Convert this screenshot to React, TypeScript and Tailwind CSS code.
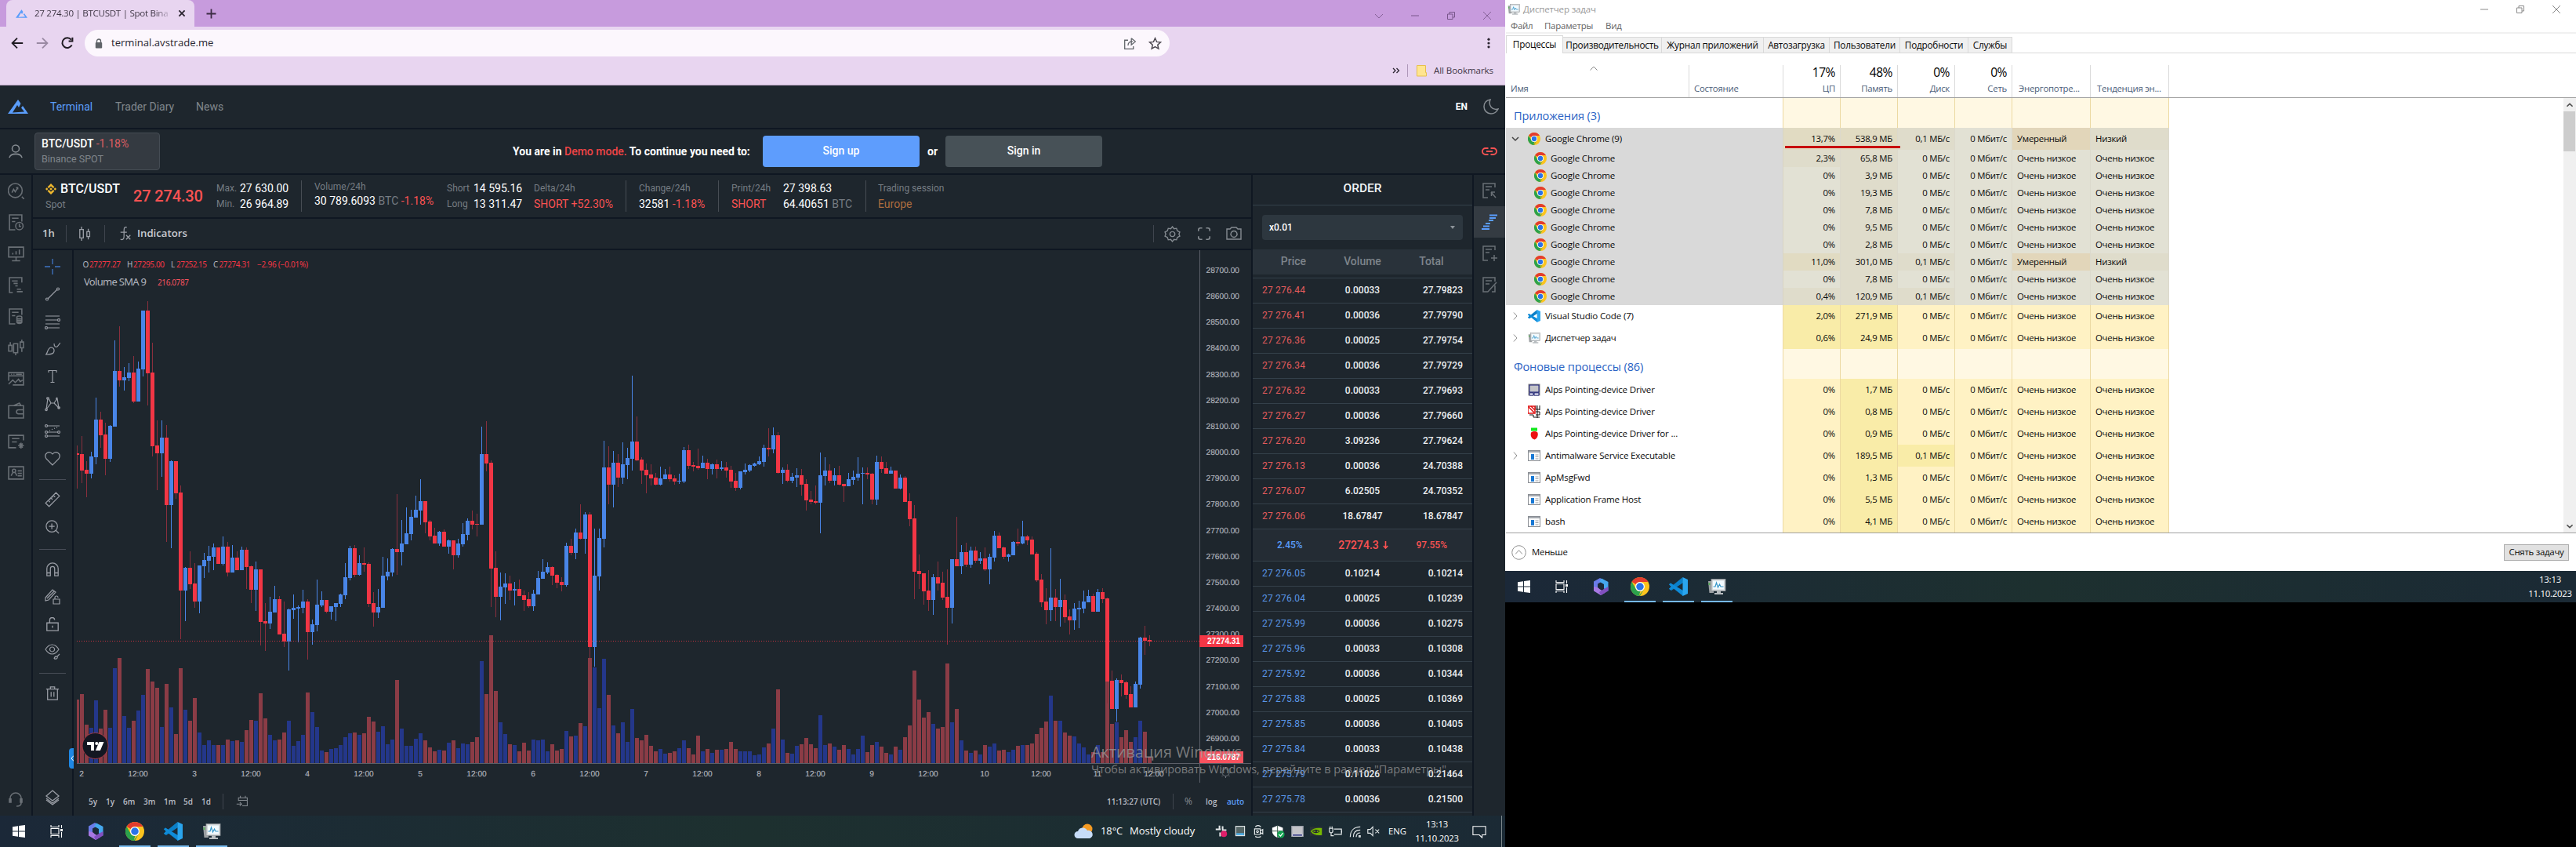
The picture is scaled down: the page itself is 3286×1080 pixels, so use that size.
import React from "react";

type Row = [string, number, number, number, number, number];
type Block = { origin: number; scale: number; base: number; rows: Row[] };

/* [direction, high, body top, body bottom, low, volume top] in the block's own units */
const BLOCKS: Block[] = [
  {
    origin: 300, scale: 3, base: 2020,
    rows: [
      ["r", 804, 834, 840, 968, 1776], ["r", 768, 837, 900, 948, 1755], ["r", 864, 897, 912, 1002, 1872], ["b", 828, 846, 912, 930, 1884],
      ["b", 621, 705, 849, 876, 1779], ["r", 675, 705, 765, 812, 1887], ["r", 717, 762, 855, 918, 1815], ["b", 726, 729, 855, 867, 1884],
      ["b", 402, 519, 732, 732, 1656], ["r", 348, 519, 555, 579, 1617], ["b", 504, 543, 555, 594, 1839], ["b", 489, 525, 546, 558, 1884],
      ["r", 462, 525, 636, 642, 1857], ["b", 483, 510, 636, 636, 1818], ["b", 288, 288, 513, 540, 1758], ["r", 252, 288, 528, 651, 1659],
      ["r", 411, 525, 807, 846, 1707], ["r", 708, 804, 834, 975, 1731], ["b", 708, 774, 834, 924, 1881], ["r", 726, 774, 1032, 1173, 1716],
      ["b", 861, 864, 1032, 1197, 1806], ["r", 864, 864, 987, 1008, 1908],
    ],
  },
  {
    origin: 680, scale: 3, base: 880,
    rows: [
      ["r", -183, -156, 219, 405, 516], ["b", 129, 132, 219, 336, 675], ["r", 69, 132, 195, 213, 717], ["r", 114, 192, 261, 285, 630],
      ["b", 123, 123, 261, 306, 762], ["b", 75, 102, 126, 171, 810], ["b", 48, 87, 105, 150, 792], ["b", 39, 54, 90, 141, 810],
      ["r", 54, 54, 117, 117, 810], ["b", 12, 51, 117, 123, 810], ["r", 33, 51, 150, 165, 789], ["b", 45, 93, 150, 150, 795],
      ["r", 69, 93, 141, 141, 792], ["b", 51, 63, 141, 141, 798], ["r", 54, 63, 129, 213, 753], ["r", 123, 126, 216, 267, 714],
      ["b", 108, 138, 216, 297, 717], ["r", 138, 138, 339, 429, 612], ["r", 267, 336, 345, 450, 708], ["b", 243, 300, 345, 366, 771],
      ["b", 201, 252, 303, 303, 792], ["r", 240, 252, 387, 387, 789], ["r", 261, 384, 414, 435, 762], ["b", 288, 291, 414, 525, 717],
      ["b", 234, 285, 294, 327, 813], ["b", 276, 282, 288, 417, 795], ["b", 216, 261, 285, 306, 771], ["r", 252, 261, 378, 483, 609],
      ["b", 330, 348, 378, 426, 684], ["b", 177, 273, 351, 375, 741], ["b", 222, 255, 276, 282, 831], ["r", 255, 255, 300, 306, 837],
      ["b", 279, 279, 300, 330, 825], ["b", 267, 267, 282, 336, 822], ["b", 231, 234, 270, 282, 810], ["b", 114, 168, 237, 252, 780],
      ["b", 48, 57, 171, 180, 765], ["r", 45, 57, 159, 168, 762], ["b", 84, 114, 159, 162, 771], ["r", 54, 114, 120, 147, 765],
      ["r", 111, 117, 270, 282, 702], ["r", 225, 267, 303, 357, 720], ["b", 213, 282, 303, 324, 759], ["b", 90, 162, 285, 285, 738],
      ["b", 96, 147, 165, 180, 807], ["b", 57, 60, 150, 165, 789], ["r", -150, 60, 72, 159, 561],
    ],
  },
  {
    origin: 440, scale: 2.8, base: 1492,
    rows: [
      ["b", 624, 708, 739, 787, 1369], ["b", 580, 672, 711, 711, 1431], ["b", 588, 613, 675, 697, 1431], ["b", 538, 588, 616, 616, 1406],
      ["b", 479, 557, 591, 641, 1386], ["r", 557, 557, 633, 672, 1411], ["r", 624, 630, 683, 697, 1436], ["r", 652, 680, 708, 708, 1450],
      ["b", 664, 666, 708, 717, 1445], ["r", 658, 666, 720, 720, 1448], ["b", 694, 697, 720, 745, 1420], ["r", 697, 697, 750, 801, 1411],
      ["b", 692, 708, 750, 759, 1439], ["b", 636, 675, 711, 720, 1422], ["b", 619, 627, 678, 697, 1425], ["r", 591, 627, 641, 658, 1417],
      ["r", 602, 638, 641, 683, 1400], ["b", 291, 389, 641, 641, 1128], ["r", 272, 389, 423, 451, 1246], ["r", 412, 420, 798, 935, 1036],
      ["r", 736, 795, 899, 972, 1235], ["b", 812, 862, 899, 983, 1347], ["b", 815, 851, 865, 924, 1389], ["r", 823, 851, 876, 910, 1425],
      ["b", 846, 871, 876, 930, 1428], ["r", 837, 871, 896, 896, 1450], ["r", 876, 893, 910, 949, 1420], ["r", 882, 907, 932, 938, 1448],
      ["b", 874, 888, 932, 949, 1408], ["b", 806, 832, 890, 890, 1411], ["b", 764, 809, 834, 834, 1408], ["b", 776, 792, 812, 818, 1450],
      ["r", 790, 792, 823, 857, 1425], ["r", 818, 820, 848, 868, 1448], ["r", 829, 846, 857, 879, 1442], ["b", 706, 717, 857, 862, 1378],
      ["r", 692, 717, 742, 750, 1397], ["b", 655, 669, 742, 764, 1394], ["r", 568, 669, 692, 694, 1350], ["b", 596, 605, 692, 745, 1361],
      ["r", 596, 605, 1078, 1117, 1117], ["b", 655, 823, 1078, 1148, 1151], ["b", 655, 689, 826, 876, 1296], ["b", 342, 437, 692, 722, 1120],
      ["r", 361, 437, 498, 568, 1249], ["b", 378, 420, 498, 580, 1358], ["r", 389, 420, 473, 507, 1386], ["b", 347, 426, 473, 496, 1347],
      ["b", 367, 403, 428, 479, 1417], ["b", 109, 344, 406, 448, 1299], ["r", 255, 344, 412, 414, 1403], ["r", 400, 409, 448, 496, 1411],
      ["r", 423, 445, 465, 529, 1392], ["r", 426, 462, 476, 501, 1431], ["r", 456, 473, 498, 501, 1450], ["b", 434, 476, 498, 501, 1442],
      ["b", 442, 462, 479, 479, 1459], ["r", 434, 462, 479, 487, 1456], ["r", 465, 476, 487, 498, 1450], ["b", 459, 484, 487, 496, 1439],
      ["b", 364, 375, 487, 493, 1411], ["r", 356, 375, 431, 442, 1439], ["r", 417, 428, 434, 451, 1462], ["r", 370, 431, 440, 445, 1394],
      ["b", 395, 420, 440, 440, 1450], ["r", 406, 420, 442, 479, 1442], ["b", 423, 426, 442, 462, 1456], ["r", 409, 426, 442, 476, 1445],
      ["b", 414, 437, 442, 448, 1445], ["r", 417, 437, 448, 473, 1442], ["r", 431, 445, 487, 510, 1417], ["r", 456, 484, 510, 521, 1442],
      ["b", 451, 451, 510, 515, 1450], ["b", 423, 445, 454, 462, 1450], ["b", 426, 428, 448, 454, 1450], ["b", 420, 423, 431, 434, 1464],
      ["b", 398, 414, 426, 428, 1462], ["b", 356, 367, 417, 434, 1436], ["r", 297, 367, 372, 398, 1422], ["b", 294, 322, 372, 386, 1369],
      ["r", 311, 322, 456, 459, 1229], ["b", 437, 445, 456, 496, 1408], ["r", 426, 445, 484, 490, 1456], ["b", 456, 470, 484, 493, 1459],
      ["b", 440, 465, 473, 507, 1431], ["r", 442, 465, 498, 538, 1425], ["r", 479, 496, 554, 591, 1403], ["r", 521, 552, 560, 568, 1425],
    ],
  },
  {
    origin: 440, scale: 2.45, base: 1306,
    rows: [
      ["r", 439, 488, 492, 497, 1259], ["b", 336, 407, 492, 588, 1156], ["b", 350, 392, 409, 439, 1249], ["r", 372, 392, 424, 431, 1245],
      ["b", 385, 407, 424, 439, 1254], ["r", 377, 407, 436, 439, 1264], ["r", 434, 434, 441, 490, 1249], ["b", 399, 419, 441, 441, 1262],
      ["b", 392, 412, 421, 436, 1279], ["b", 350, 402, 414, 424, 1262], ["b", 382, 399, 403, 497, 1220], ["r", 382, 399, 404, 419, 1272],
      ["r", 399, 402, 483, 497, 1249], ["b", 345, 365, 483, 500, 1240], ["r", 348, 365, 387, 399, 1254], ["r", 365, 385, 402, 402, 1274],
      ["b", 380, 392, 402, 402, 1279], ["r", 392, 392, 448, 448, 1254], ["b", 404, 414, 448, 451, 1264], ["r", 409, 414, 490, 490, 1225],
      ["r", 463, 488, 544, 566, 1188], ["r", 500, 541, 708, 794, 1017], ["r", 654, 706, 715, 762, 1107], ["r", 713, 713, 769, 811, 1164],
      ["r", 703, 767, 796, 831, 1147], ["b", 715, 725, 796, 843, 1183], ["r", 676, 725, 745, 767, 1198], ["r", 708, 742, 789, 796, 1193],
      ["r", 701, 786, 821, 936, 995], ["b", 669, 669, 821, 870, 1178], ["r", 537, 669, 691, 691, 1137], ["b", 625, 647, 691, 715, 1235],
      ["r", 617, 647, 686, 693, 1267], ["b", 630, 642, 686, 696, 1274], ["r", 630, 642, 674, 681, 1267], ["b", 647, 666, 674, 684, 1279],
      ["r", 632, 666, 701, 706, 1249], ["b", 652, 661, 701, 747, 1254], ["b", 581, 595, 664, 676, 1245], ["r", 586, 595, 635, 635, 1267],
      ["r", 630, 632, 661, 669, 1264], ["b", 652, 654, 661, 676, 1272], ["b", 613, 615, 657, 657, 1264], ["r", 573, 615, 620, 627, 1252],
      ["b", 549, 598, 620, 622, 1249], ["r", 593, 598, 610, 625, 1249], ["r", 598, 608, 654, 654, 1245], ["r", 647, 652, 735, 740, 1215],
      ["r", 715, 733, 804, 818, 1196], ["r", 759, 801, 828, 872, 1176], ["b", 635, 789, 828, 862, 1095], ["r", 762, 789, 818, 862, 1174],
      ["b", 730, 796, 818, 880, 1174], ["r", 779, 796, 850, 867, 1210], ["r", 826, 848, 860, 904, 1220], ["b", 806, 823, 860, 889, 1223],
      ["b", 799, 821, 826, 884, 1245], ["b", 767, 801, 823, 838, 1257], ["b", 764, 784, 804, 804, 1279], ["r", 777, 784, 833, 833, 1272],
      ["b", 762, 772, 833, 833, 1249], ["r", 759, 772, 794, 806, 1272], ["r", 789, 791, 1051, 1119, 1051], ["r", 1017, 1049, 1137, 1137, 1183],
      ["b", 1041, 1046, 1137, 1176, 1178], ["r", 1029, 1046, 1056, 1098, 1225], ["r", 1049, 1053, 1093, 1105, 1203], ["r", 1066, 1090, 1132, 1132, 1240],
      ["b", 1051, 1058, 1132, 1132, 1225], ["b", 911, 914, 1061, 1073, 1174], ["r", 877, 914, 924, 968, 1208], ["r", 906, 921, 926, 941, 1286],
    ],
  },
];

const AXIS_Y = 973;

const CANDLES = BLOCKS.flatMap((b) =>
  b.rows.map(([dir, ...v]) => {
    const [high, top, bottom, low, vol] = v.map((n) => Math.round(b.origin + n / b.scale));
    return { up: dir === "b", high, top, bottom, low, vol };
  }),
);

function PriceChart() {
  return (
    <svg className="block" width="1502" height="681" viewBox="94 319 1502 681" shapeRendering="crispEdges">
      <clipPath id="pane"><rect x="98" y="319" width="1432" height="655" /></clipPath>
      <g clipPath="url(#pane)">
        {CANDLES.map((c, i) => (
          <rect key={i} x={96 + 6 * i} y={c.vol} width="5" height={Math.max(1, AXIS_Y - c.vol)} fill={c.up ? "#24378a" : "#8b3c46"} />
        ))}
        {CANDLES.map((c, i) => (
          <g key={i}>
            <rect x={98 + 6 * i} y={c.high} width="1" height={c.low - c.high} fill={c.up ? "#4985e7" : "#8a2f3d"} />
            <rect x={96 + 6 * i} y={c.top} width="5" height={Math.max(1, c.bottom - c.top)} fill={c.up ? "#4985e7" : "#f23645"} />
          </g>
        ))}
      </g>
      <line x1="98" y1="817.5" x2="1530" y2="817.5" stroke="#f23645" strokeDasharray="1 2" strokeOpacity="0.8" />
      <line x1="98" y1="973.5" x2="1596" y2="973.5" stroke="#5b5f68" />
      <line x1="1530.5" y1="319" x2="1530.5" y2="998" stroke="#5b5f68" />
      <g fontFamily="Liberation Sans, sans-serif" fontSize="10.2" fill="#b2b5be" stroke="#b2b5be" strokeWidth="0.15" textRendering="geometricPrecision">
        {Array.from({ length: 19 }, (_, k) => (
          <text key={k} x="1538.5" y={348 + 33.16 * k} textLength="42.5">{28700 - 100 * k}.00</text>
        ))}
        {Array.from({ length: 20 }, (_, k) => (
          <text key={k} x={104 + 72 * k} y="989.5" textAnchor="middle" fontSize="10.2">{k % 2 ? "12:00" : 2 + k / 2}</text>
        ))}
      </g>
      <rect x="1530" y="810" width="56" height="15" rx="1" fill="#f23645" />
      <rect x="1530" y="958" width="56" height="15" rx="1" fill="#f7525f" />
      <g fontFamily="Liberation Sans, sans-serif" fontSize="10.2" fontWeight="700" fill="#fff">
        <text x="1540" y="821.3" textLength="42">27274.31</text>
        <text x="1540" y="969.3" textLength="42">216.0787</text>
      </g>
      <g fontFamily="Noto Sans, sans-serif" fontSize="10" fill="#f23645">
        <text x="105.5" y="341" fill="#b2b5be">O</text><text x="114" y="341" textLength="40">27277.27</text>
        <text x="162" y="341" fill="#b2b5be">H</text><text x="170" y="341" textLength="40">27295.00</text>
        <text x="218" y="341" fill="#b2b5be">L</text><text x="225" y="341" textLength="39">27252.15</text>
        <text x="272" y="341" fill="#b2b5be">C</text><text x="279.500" y="341" textLength="40">27274.31</text>
        <text x="328" y="341" textLength="65">−2.96 (−0.01%)</text>
        <text x="107" y="364" fontSize="13" fill="#b2b5be" textLength="80">Volume SMA 9</text>
        <text x="201" y="364" fill="#f7525f" textLength="40">216.0787</text>
      </g>
      <g shapeRendering="auto">
        <circle cx="121.500" cy="951" r="16.500" fill="#131722" stroke="#b9404c" strokeWidth="0.8" />
        <path d="M111 946h9v11h-4v-7h-5zM126.500 946h6l-4.600 11h-6z" fill="#fff" />
        <circle cx="123.300" cy="948" r="2.100" fill="#fff" />
        <g stroke="#6f747c" fill="none">
          <circle cx="1563.500" cy="985" r="4.500" />
          <path d="M1563.500 978v2M1563.500 990v2M1556.500 985h2M1568.500 985h2M1558.500 980l1.500 1.500M1567 988.500l1.500 1.500M1568.500 980l-1.500 1.500M1560 988.500l-1.500 1.500" />
        </g>
      </g>
    </svg>
  );
}

function Ico({ d, s = 20, c = "#7f858b", w = 1.3, fill = "none", children }: { d?: string; s?: number; c?: string; w?: number; fill?: string; children?: React.ReactNode }) {
  return (
    <svg className="block shrink-0" width={s} height={s} viewBox="0 0 20 20" fill={fill} stroke={c} strokeWidth={w}>
      {d && <path d={d} />}
      {children}
    </svg>
  );
}

const ChromeLogo = ({ s }: { s: number }) => (
  <svg className="block shrink-0" width={s} height={s} viewBox="0 0 48 48">
    <circle cx="24" cy="24" r="24" fill="#fcc31e" />
    <path d="M24 0a24 24 0 0 1 20.800 12H24a12 12 0 0 0-10.400 6L3.200 12A24 24 0 0 1 24 0z" fill="#e33b2e" />
    <path d="M3.200 12 13.600 30A12 12 0 0 0 24 36h.9L21 48A24 24 0 0 1 3.200 12z" fill="#2ba24c" />
    <path d="M34.400 30 24 48a24 24 0 0 1-3.500-.2z" fill="#2ba24c" />
    <circle cx="24" cy="24" r="12" fill="#fff" />
    <circle cx="24" cy="24" r="9.500" fill="#2a73e8" />
  </svg>
);

const VsLogo = ({ s }: { s: number }) => (
  <svg className="block shrink-0" width={s} height={s} viewBox="0 0 24 24">
    <path d="M0 9.300 2 7.600 5.200 10 17.500 0 18 7 3 17 0 14.800 2.800 12z" fill="#0a7fc8" />
    <path d="M2 16.400 0 14.700 3 12 0 9.300 2 7.600 18 17v7L5.200 14z" fill="#0f8bd8" />
    <path d="M17.500 0 24 3v18l-6.500 3z" fill="#2aa5ee" />
  </svg>
);

const MonitorLogo = ({ s }: { s: number }) => (
  <svg className="block shrink-0" width={s} height={s} viewBox="0 0 24 24">
    <path d="M1 5h7v15H2.500z" fill="#9da1a4" />
    <rect x="1.500" y="7" width="2" height="3" fill="#5bb05b" />
    <rect x="5" y="2.500" width="18" height="15" fill="#d3d7d9" stroke="#8f9498" strokeWidth="0.8" />
    <rect x="7" y="4.500" width="14" height="11" fill="#f2fafe" />
    <path d="M7.500 12h2.500l1.500-5 2 6 2-4 1.500 3h3.500" fill="none" stroke="#3797c9" strokeWidth="1.200" />
    <path d="M12 17.500h5v2.500h3v2H9v-2h3z" fill="#b8bdc0" />
  </svg>
);

const HexLogo = ({ s }: { s: number }) => (
  <svg className="block shrink-0" width={s} height={s} viewBox="0 0 24 24">
    <path d="M11 1 3 5.500v10L8 13V8.500L16 4z" fill="#6a7be8" />
    <path d="M3 12v5.500L12 23l6-3.500-7-4L8 13z" fill="#a678e2" />
    <path d="M13 1.500 21.500 6v11.500L16 14.500V9L10 5.500z" fill="#45a8ee" />
    <path d="M21.500 12v5.500L12 23l-2-4 6-4z" fill="#8250c0" />
  </svg>
);

const WinLogo = () => (
  <svg className="block" width="16" height="16" viewBox="0 0 16 16" fill="#fff">
    <path d="M0 2.200 7 1.200v6.300H0zM8 1.100 16 0v7.500H8zM0 8.500h7v6.300L0 13.800zM8 8.500h8V16l-8-1.100z" />
  </svg>
);

const TaskView = () => (
  <svg className="block" width="17" height="16" viewBox="0 0 17 16" fill="none" stroke="#fff" strokeWidth="1.100">
    <path d="M1 0v2.500h10V0M1 16v-2.500h10V16M1 4.500h10v7H1zM14.500 0v4M14.500 9v7" />
    <path d="M13 5h3v3h-3z" fill="#fff" stroke="none" />
  </svg>
);

function TaskIcons() {
  return (
    <div className="flex h-10 items-stretch">
      <div className="flex w-12 items-center justify-center"><WinLogo /></div>
      <div className="flex w-[49px] items-center justify-center"><TaskView /></div>
      <div className="flex w-[50px] items-center justify-center"><HexLogo s={24} /></div>
      {[<ChromeLogo key="c" s={24} />, <VsLogo key="v" s={24} />, <MonitorLogo key="m" s={24} />].map((icon, i) => (
        <div key={i} className="mx-[4.5px] flex w-10 flex-col items-center justify-end">
          <div className="mb-[6px]">{icon}</div>
          <div className="h-0.5 w-10 shrink-0 bg-[#76b9ed]" />
        </div>
      ))}
    </div>
  );
}

function BrandMark({ w, h }: { w: number; h: number }) {
  return (
    <svg className="block shrink-0" width={w} height={h} viewBox="0 0 26 18">
      <path d="M13 0 0 18h26L19 8l-2 2.500 4 5L6 16.500 12 7l2 3 2.500-5z" fill="#5a9dfb" />
    </svg>
  );
}

function Browser() {
  return (
    <div className="h-[109px] border-b border-[#b9a3c2] bg-[#e8d5f0] font-['Open_Sans',sans-serif]">
      <div className="flex h-[34px] items-end bg-[#c79bdd]">
        <div className="ml-2 flex h-[34px] w-[240px] items-center rounded-t-lg bg-[#e8d5f0] pl-3">
          <BrandMark w={15} h={11} />
          <div className="ml-[9px] w-[174px] bg-gradient-to-r from-[#3c3442] from-88% to-[#e0cce9] to-100% bg-clip-text text-[11.6px] tracking-[-0.3px] whitespace-nowrap text-transparent">27 274.30 | BTCUSDT | Spot Bina</div>
          <div className="ml-2"><Ico s={12} w={3} c="#2b2430" d="M4 4l12 12M16 4L4 16" /></div>
        </div>
        <div className="ml-[14px] flex h-[34px] w-4 items-center"><Ico s={15} w={2.400} c="#3c2b45" d="M10 2v16M2 10h16" /></div>
        <div className="mr-[18px] ml-auto flex h-[28px] items-center gap-9">
          <Ico s={10} w={1.700} c="#78568a" d="M0 6l10 10L20 6" />
          <Ico s={10} w={2} c="#78568a" d="M0 10h20" />
          <Ico s={10} w={2} c="#78568a" d="M1 6h13v13H1zM6 6V1h13v13h-5" />
          <Ico s={10} w={1.700} c="#78568a" d="M0 0l20 20M20 0L0 20" />
        </div>
      </div>
      <div className="mt-1 flex h-[34px] items-center pl-[14px]">
        <Ico s={16} w={2.300} c="#1f1b22" d="M19 10H3M10 2l-8 8 8 8" />
        <div className="ml-4"><Ico s={16} w={2.300} c="#9a8aa3" d="M1 10h16M10 2l8 8-8 8" /></div>
        <div className="mr-[14px] ml-4"><Ico s={16} w={2.500} c="#1f1b22" d="M17 13a8 8 0 1 1-1-8.500M18 1v6h-6" /></div>
        <div className="flex h-[34px] w-[1384px] items-center rounded-full bg-[#fcf7fd] pl-[13px]">
          <svg width="10" height="13" viewBox="0 0 10 13"><path d="M2.500 5V3.500a2.500 2.500 0 0 1 5 0V5" fill="none" stroke="#5f6368" strokeWidth="1.400" /><rect x="0.800" y="5" width="8.400" height="7.500" rx="1" fill="#5f6368" /></svg>
          <div className="ml-[11px] text-[13.1px] text-[#2a2630]">terminal.avstrade.me</div>
          <div className="mr-[10px] ml-auto flex gap-[15px]">
            <Ico s={17} w={1.500} c="#5f6368" d="M7 5H2v13h13v-4M7 13c0-4 3-6 7-6M12 2l6 5-6 5V2" />
            <Ico s={17} w={1.700} c="#4b474f" d="M10 2l2.400 5.500 5.800.5-4.400 4 1.300 5.800L10 14.800l-5.100 3 1.300-5.800L1.800 8l5.800-.5z" />
          </div>
        </div>
        <div className="mr-[13px] ml-auto"><Ico s={16} c="none"><g fill="#2b2430"><circle cx="10" cy="4" r="2" /><circle cx="10" cy="10" r="2" /><circle cx="10" cy="16" r="2" /></g></Ico></div>
      </div>
      <div className="flex h-9 items-center justify-end pr-[15px] text-[12px] text-[#3f3646]">
        <Ico s={10} w={2.600} c="#2b2430" d="M2 4l6 6-6 6M11 4l6 6-6 6" />
        <div className="mr-[11px] ml-[9px] h-4 w-px bg-[#ae97b9]" />
        <svg width="13" height="15" viewBox="0 0 13 15"><path d="M0.500 0.500h11v9h1v4.500h-12z" fill="#ffe590" stroke="#e6c04e" /></svg>
        <div className="ml-[9px] w-[76px] text-[11.6px] tracking-[-0.1px] whitespace-nowrap">All Bookmarks</div>
      </div>
    </div>
  );
}

const DOC = "M8 19H2V1h15v5M5 5h8M5 9h5";

const LEFT_ICONS = [
  "M17 17l3 3M9 1a8 8 0 1 0 0 17a8 8 0 0 0 0-17M5 12l2-4 2 3 3-5M10 6h2v2",
  "M9 19H2V1h15v8M5 5h8M5 9h4M14 10a4.500 4.500 0 1 0 0 9a4.500 4.500 0 0 0 0-9M14 12v3h2",
  "M1 2h18v12H1zM10 14v4M5 18.500h10M6 11V9M10 11V7M14 11V5",
  "M6 19H2V1h15v6M5 5h7M7 8h5M9 11h3M11 15h5M11 18h7",
  "M9 19H2V1h15v7M5 5h8M5 9h4M11 11c0-2 6-2 6 0v6c0 2-6 2-6 0zM11 13h6M11 15h6M11 17h6",
  "M1 7h4v7H1zM3 3v4M7 5h5v11H7zM9.500 16v3M15 3h4v7h-4zM17 0v3M17 10v5",
  "M1 12V2h18v15H6M1 6h18M4 4h1M7 4h1M10 4h7M1 16l5-5 3 3 4-4 2 3 3-2",
  "M1 4h18v15H1zM7 4l7-3 2 3M19 9h-6a2.500 2.500 0 0 0 0 5h6",
  "M10 17H1V2h18v6M5 6h9M5 10h6M16 11v7M12.500 14.500h7M14 12l4 5M18 12l-4 5",
  "M1 2h18v15H1zM4 13l2-4h3l2 4M7.500 5a2 2 0 1 0 0 4a2 2 0 0 0 0-4M12 7h5M12 10h5M12 13h5",
];

const DRAW_ICONS: [number, string][] = [
  [35, "M4 16L16 4M17 2a1.500 1.500 0 1 0 0 3a1.500 1.500 0 0 0 0-3M3 15a1.500 1.500 0 1 0 0 3a1.500 1.500 0 0 0 0-3"],
  [35, "M1 3h18M1 8h15M1 13h18M4 18h15M18 6.500a1.500 1.500 0 1 0 0 3a1.500 1.500 0 0 0 0-3M2 16.500a1.500 1.500 0 1 0 0 3a1.500 1.500 0 0 0 0-3"],
  [35, "M1 17c3 0 2-8 7-9c4 0 5 4 3 7c-2 2-5 2-10 2M12 3c0 4 2 5 4 4l4-5"],
  [35, "M5 5V2.500h10V5M10 2.500v15M7.500 17.500h5"],
  [35, "M4 3L2 17L8 9L5 3M8 9L12 9L16 3L18 15L12 9M4 1.500a1.300 1.300 0 1 0 0 2.600a1.300 1.300 0 0 0 0-2.600M16 2a1.300 1.300 0 1 0 0 2.600M2 16a1.300 1.300 0 1 0 .1 0M18 13.500a1.300 1.300 0 1 0 .1 0"],
  [36, "M4 3h15M4 11h12M4 16h15M2 1.500a1.500 1.500 0 1 0 .1 0M2 9.500a1.500 1.500 0 1 0 .1 0M2 14.500a1.500 1.500 0 1 0 .1 0M18 9.500a1.500 1.500 0 1 0 .1 0M6 9l1-.4M9 7.600l1-.4M12 6.400l1-.4M15 5.400l1-.4"],
  [34, "M10 18L2 10C-2 3 6-1 10 4C14-1 22 3 18 10z"],
];

function Rail() {
  return (
    <div className="flex w-[42px] shrink-0 flex-col items-center border-r-2 border-[#0f1722] text-gray-500">
      {LEFT_ICONS.map((d, i) => (
        <div key={i} className="flex h-10 items-center"><Ico s={21} w={1.500} c="#6a7076" d={d} /></div>
      ))}
      <div className="mt-auto flex h-10 items-center"><Ico s={20} w={1.600} c="#6a7076" d="M3 12V8a7 7 0 0 1 14 0v6c0 3-3 4-6 4M2 8v5h2V8M16 8v5h2V8" /></div>
    </div>
  );
}

function DrawTools() {
  const c = "#9a9ea6";
  return (
    <div className="relative flex w-[52px] shrink-0 flex-col items-center border-r-2 border-[#0f1722] pt-1">
      <div className="flex h-[34px] items-center"><Ico s={20} c="#3f74c4" d="M10 0v7M10 13v7M0 10h7M13 10h7" /></div>
      {DRAW_ICONS.map(([h, d], i) => (
        <div key={i} className={h === 35 ? "flex h-[35px] items-center" : h === 36 ? "flex h-9 items-center" : "flex h-[34px] items-center"}><Ico s={20} w={1.200} c={c} d={d} /></div>
      ))}
      <div className="mt-[9px] h-px w-[34px] shrink-0 bg-[#484d57]" />
      <div className="mt-[7px] flex h-[35px] items-center"><Ico s={22} w={1.100} c={c} d="M2 14L14 2l4 4L6 18zM5 11l2 2M8 8l2 2M11 5l2 2M6.500 9.500l1 1M9.500 6.500l1 1" /></div>
      <div className="flex h-[35px] items-center"><Ico s={18} w={1.400} c={c} d="M9 1a8 8 0 1 0 0 16a8 8 0 0 0 0-16M15 15l4 4M9 5v8M5 9h8" /></div>
      <div className="mt-[11px] h-px w-[34px] shrink-0 bg-[#484d57]" />
      <div className="mt-[7px] flex h-[35px] items-center"><Ico s={18} w={1.400} c={c} d="M2 19V9a8 8 0 0 1 16 0v10h-5V9a3 3 0 0 0-6 0v10zM2 15h5M13 15h5" /></div>
      <div className="flex h-[35px] items-center"><Ico s={20} w={1.200} c={c} d="M1 11L10 1l4 3L5 14l-4 1zM3 12l9-9M11 13h8v6h-8zM13 13v-2a2 2 0 0 1 4 0" /></div>
      <div className="flex h-[35px] items-center"><Ico s={18} w={1.500} c={c} d="M2 8h16v11H2zM6 8V4a3.500 3.500 0 0 1 7 0M10 12v3" /></div>
      <div className="flex h-[35px] items-center"><Ico s={20} w={1.200} c={c} d="M1 7c5-8 12-8 17 0c-5 8-12 8-17 0M9.500 4a3 3 0 1 0 .1 0M12 19c1-4 5-4 4-1c-1 2-3 1-4 1M16 16l3-3" /></div>
      <div className="mt-[10px] h-px w-[34px] shrink-0 bg-[#484d57]" />
      <div className="mt-[7px] flex h-[35px] items-center"><Ico s={18} w={1.400} c={c} d="M1 4h18M3 4v15h14V4M7 4V1h6v3M8 8v7M12 8v7" /></div>
      <div className="mt-auto mb-1 flex h-[38px] items-center"><Ico s={20} w={1.300} c="#9a9ea6" d="M10 1l8 7-8 6-8-6zM2 11l8 6 8-6M2 13l8 6 8-6" /></div>
      <div className="absolute bottom-[60px] left-[46px] flex h-[26px] w-1.5 items-center rounded-l bg-[#1e88e5]">
        <svg width="6" height="8" viewBox="0 0 6 8"><path d="M6 0.500 3 4l3 3.500" fill="none" stroke="#fff" /></svg>
      </div>
    </div>
  );
}

const Sep = () => <div className="h-10 w-px shrink-0 bg-[#474d54]" />;

function Stat({ w, a, b }: { w: string; a: React.ReactNode; b: React.ReactNode }) {
  return (
    <div className={`${w} shrink-0 whitespace-nowrap`}>
      <div className="h-5 text-[12px] leading-5 text-[#757c83]">{a}</div>
      <div className="h-5 text-[14px] leading-5 text-white">{b}</div>
    </div>
  );
}

function InfoBar() {
  return (
    <div className="flex h-14 items-center border-b-2 border-[#0f1722] pl-4">
      <div className="w-[112px] shrink-0 pt-[1px]">
        <div className="flex h-5 items-center">
          <svg width="14" height="14" viewBox="0 0 14 14" fill="#f0b92e"><path d="M7 0l4.500 4.500-1.700 1.600L7 3.400 4.200 6.100 2.500 4.500zM7 5.200 8.800 7 7 8.800 5.200 7zM1.700 5.300 3.400 7 1.700 8.700 0 7zM12.300 5.300 14 7l-1.700 1.700L10.600 7zM4.200 7.900 7 10.600l2.800-2.700 1.700 1.600L7 14 2.500 9.500z" /></svg>
          <span className="ml-[5px] text-[16px] font-medium text-white">BTC/USDT</span>
        </div>
        <div className="h-5 text-[12.5px] leading-5 text-[#757c83]">Spot</div>
      </div>
      <div className="w-[106px] shrink-0 text-[20px] font-medium tracking-[-0.15px] text-[#fa5252]">27 274.30</div>
      <div className="w-[108px] shrink-0 text-[14px] text-white">
        <div className="flex h-5 items-center"><span className="w-[30px] text-[12px] text-[#757c83]">Max.</span>27 630.00</div>
        <div className="flex h-5 items-center"><span className="w-[30px] text-[12px] text-[#757c83]">Min.</span>26 964.89</div>
      </div>
      <Sep />
      <div className="-mt-[6px] ml-4 w-[169px] shrink-0 whitespace-nowrap">
        <div className="h-[18px] text-[12px] leading-[18px] text-[#757c83]">Volume/24h</div>
        <div className="h-[18px] text-[14px] leading-[18px] text-white">30 789.6093 <span className="text-[#757c83]">BTC</span> <span className="text-[#fa5252]">-1.18%</span></div>
      </div>
      <div className="w-[111px] shrink-0 text-[14px] text-white">
        <div className="flex h-5 items-center"><span className="w-[34px] text-[12px] text-[#757c83]">Short</span>14 595.16</div>
        <div className="flex h-5 items-center"><span className="w-[34px] text-[12px] text-[#757c83]">Long</span>13 311.47</div>
      </div>
      <Stat w="w-[117px]" a="Delta/24h" b={<span className="text-[#fa5252]">SHORT +52.30%</span>} />
      <Sep />
      <div className="w-4 shrink-0" />
      <Stat w="w-[101px]" a="Change/24h" b={<>32581 <span className="text-[#fa5252]">-1.18%</span></>} />
      <Sep />
      <div className="w-4 shrink-0" />
      <Stat w="w-[66px]" a="Print/24h" b={<span className="text-[#fa5252]">SHORT</span>} />
      <div className="w-[105px] shrink-0 text-[14px] text-white">
        <div className="h-5 leading-5">27 398.63</div>
        <div className="h-5 leading-5">64.40651 <span className="text-[#757c83]">BTC</span></div>
      </div>
      <Sep />
      <div className="w-[15px] shrink-0" />
      <Stat w="w-[100px]" a="Trading session" b={<span className="text-[#ad6d3f]">Europe</span>} />
    </div>
  );
}

const ASKS = [
  ["27 276.44", "0.00033", "27.79823"], ["27 276.41", "0.00036", "27.79790"], ["27 276.36", "0.00025", "27.79754"], ["27 276.34", "0.00036", "27.79729"],
  ["27 276.32", "0.00033", "27.79693"], ["27 276.27", "0.00036", "27.79660"], ["27 276.20", "3.09236", "27.79624"], ["27 276.13", "0.00036", "24.70388"],
  ["27 276.07", "6.02505", "24.70352"], ["27 276.06", "18.67847", "18.67847"],
];
const BIDS = [
  ["27 276.05", "0.10214", "0.10214"], ["27 276.04", "0.00025", "0.10239"], ["27 275.99", "0.00036", "0.10275"], ["27 275.96", "0.00033", "0.10308"],
  ["27 275.92", "0.00036", "0.10344"], ["27 275.88", "0.00025", "0.10369"], ["27 275.85", "0.00036", "0.10405"], ["27 275.84", "0.00033", "0.10438"],
  ["27 275.79", "0.11026", "0.21464"], ["27 275.78", "0.00036", "0.21500"],
];

function Book({ rows, tone }: { rows: string[][]; tone: string }) {
  return (
    <>
      {rows.map((r) => (
        <div key={r[0]} className="grid h-8 shrink-0 grid-cols-3 items-center border-b border-[#34404a] px-3 pb-px text-[12px] font-medium text-[#eceef0]">
          <span className={`${tone} font-normal tracking-[0.2px]`}>{r[0]}</span>
          <span className="text-center">{r[1]}</span>
          <span className="text-right">{r[2]}</span>
        </div>
      ))}
    </>
  );
}

function OrderPanel() {
  return (
    <div className="flex w-[282px] shrink-0 flex-col overflow-hidden border-r-2 border-[#0f1722]">
      <div className="flex h-[39px] shrink-0 items-center justify-center border-b border-[#34404a] pb-0.5 text-[15.5px] font-medium text-[#f2f4f5]">ORDER</div>
      <div className="mx-3 mt-3 flex h-8 shrink-0 items-center rounded bg-[#2d373f] px-[9px] pb-px text-[12px] font-medium text-white">
        x0.01
        <div className="mr-px ml-auto border-x-[3.5px] border-t-4 border-x-transparent border-t-[#8d949a]" />
      </div>
      <div className="mt-3 grid h-8 shrink-0 grid-cols-[104px_72px_104px] items-center bg-[#29323a] pb-px text-center text-[14px] font-medium text-[#7d848b]">
        <span>Price</span><span>Volume</span><span>Total</span>
      </div>
      <div className="h-[5px] shrink-0 border-b border-[#34404a]" />
      <Book rows={ASKS} tone="text-[#e25b5c]" />
      <div className="grid h-[41px] shrink-0 grid-cols-3 items-center border-b border-[#34404a] bg-[#242c34] px-3 text-[12px] font-medium">
        <span className="pl-[19px] text-[#5a9dfb]">2.45%</span>
        <span className="flex items-center justify-center pl-0.5 text-[14px] whitespace-nowrap text-[#fa5252]">27274.3<svg className="ml-[5px]" width="7" height="10" viewBox="0 0 7 10"><path d="M3.500 0v8.500M0.800 6l2.700 3 2.700-3" fill="none" stroke="#fa5252" strokeWidth="1.600" /></svg></span>
        <span className="pr-[20px] text-right text-[#fa5252]">97.55%</span>
      </div>
      <Book rows={BIDS} tone="text-[#5a96e6]" />
    </div>
  );
}

function RightRail() {
  return (
    <div className="flex w-10 shrink-0 flex-col">
      <div className="flex h-10 items-center justify-center"><Ico s={20} w={1.500} c="#6a7076" d={`${DOC}M12 12h5M12.500 12v5M12 12l6 7`} /></div>
      <div className="flex h-10 items-center justify-center bg-[#343b42]"><Ico s={20} w={1.800} c="#5a9dfb" d="M10 1.500h10M10 5h8M9 8h6M5 12h6M2 15.500h8M0 19h10" /></div>
      <div className="flex h-10 items-center justify-center"><Ico s={20} w={1.500} c="#6a7076" d={`${DOC}M16 12v8M12 16h8`} /></div>
      <div className="flex h-10 items-center justify-center"><Ico s={20} w={1.500} c="#6a7076" d={`${DOC}M17 11v8h-4M8 19l11-12`} /></div>
    </div>
  );
}

function Terminal() {
  return (
    <div className="flex h-[931px] flex-col bg-[#1e262d] font-[Roboto,sans-serif]">
      <div className="flex h-14 shrink-0 items-center border-b-2 border-[#0f1722] pr-[8px] pl-2.5 text-[14px] text-[#80868c]">
        <BrandMark w={26} h={18} />
        <span className="ml-7 w-[83px] text-[#5a9dfb]">Terminal</span>
        <span className="w-[103px]">Trader Diary</span>
        <span>News</span>
        <span className="mr-5 ml-auto text-[12px] font-bold text-white">EN</span>
        <Ico s={20} w={1.500} c="#868c92" d="M9 1C3 2 1 6 1 10c0 5 4 9 9 9c4 0 7-2 9-6C12 15 6 9 9 1z" />
      </div>
      <div className="flex h-[58px] shrink-0 items-center border-b-2 border-[#0f1722] pr-2.5">
        <div className="flex w-11 justify-center pr-1"><Ico s={18} w={1.700} c="#868c92" d="M10 1a5 5 0 1 0 0 10a5 5 0 0 0 0-10M1 19c2-7 16-7 18 0" /></div>
        <div className="h-12 w-40 rounded border border-[#454c54] bg-[#343a41] px-2 pt-[3px]">
          <div className="h-5 text-[14px] leading-5 font-medium text-white">BTC/USDT <span className="font-normal text-[#dd5e61]">-1.18%</span></div>
          <div className="h-5 text-[12.5px] leading-[19px] text-[#80868c]">Binance SPOT</div>
        </div>
        <div className="ml-[450px] w-[319px] text-[14px] font-bold whitespace-nowrap text-white">You are in <span className="font-medium text-[#ee4446]">Demo mode.</span> To continue you need to:</div>
        <div className="flex h-10 w-[200px] items-center justify-center rounded bg-[#5e9dfd] pb-0.5 text-[14px] font-medium text-white">Sign up</div>
        <span className="w-[33px] text-center text-[14px] font-bold text-white">or</span>
        <div className="flex h-10 w-[200px] items-center justify-center rounded bg-[#475157] pb-0.5 text-[14px] font-medium text-white">Sign in</div>
        <div className="ml-auto"><Ico s={20} w={1.900} c="#fa5252" d="M8.500 6H5a4 4 0 0 0 0 8h3.500M11.500 6H15a4 4 0 0 1 0 8h-3.500M6 10h8" /></div>
      </div>
      <div className="flex min-h-0 flex-1">
        <Rail />
        <div className="flex w-[1556px] shrink-0 flex-col border-r-2 border-[#0f1722]">
          <InfoBar />
          <div className="flex h-10 shrink-0 items-center border-b-2 border-[#0f1722] pl-3 font-['Open_Sans',sans-serif] text-[13px] font-semibold text-[#c8cbd1]">
            <span className="w-[30px]">1h</span>
            <div className="h-[22px] w-px bg-[#3f454e]" />
            <div className="mx-[15px]"><Ico s={18} w={1.500} c="#9a9ea6" d="M2 4h5v12H2zM4.500 0v4M4.500 16v4M12 7h4v7h-4zM14 3v4M14 14v4" /></div>
            <div className="h-[22px] w-px bg-[#3f454e]" />
            <div className="ml-[17px] w-[24px]"><Ico s={18} w={1.400} c="#9a9ea6" d="M12 1c-4-1-4 2-4 5v8c0 4-2 5-5 4M3 8h9M11 12l6 6M17 12l-6 6" /></div>
            <span className="text-[13.2px]">Indicators</span>
            <div className="mr-[13px] ml-auto h-[22px] w-px bg-[#3f454e]" />
            <Ico s={21} w={1.300} c="#868c92" d="M10 1l2 2.500 3-.5 1 3 3 1.500L18 10l1 2.500-3 1.500-1 3-3-.5L10 19l-2-2.500-3 .5-1-3-3-1.500L2 10 1 7.500 4 6l1-3 3 .5zM10 7a3 3 0 1 0 .1 0" />
            <div className="ml-[22px]"><Ico s={16} w={2} c="#868c92" d="M1 6V4a3 3 0 0 1 3-3h3M13 1h3a3 3 0 0 1 3 3v2M19 14v2a3 3 0 0 1-3 3h-3M7 19H4a3 3 0 0 1-3-3v-2" /></div>
            <div className="mr-[12px] ml-5"><Ico s={20} w={1.400} c="#868c92" d="M1 4h4l2-2h6l2 2h4v13H1zM10 6.500a4 4 0 1 0 .1 0" /></div>
          </div>
          <div className="flex min-h-0 flex-1">
            <DrawTools />
            <div className="flex w-[1502px] flex-col">
              <PriceChart />
              <div className="flex h-10 items-center pr-[11px] pl-[19px] font-['Open_Sans',sans-serif] text-[10px] font-semibold text-[#b9bcc4]">
                <div className="flex items-center pt-1">
                  <span className="w-[22px]">5y</span><span className="w-[22px]">1y</span><span className="w-[26px]">6m</span><span className="w-[26px]">3m</span>
                  <span className="w-[25px]">1m</span><span className="w-[23px]">5d</span><span className="w-[27px]">1d</span>
                  <div className="h-5 w-px bg-[#3f454e]" />
                  <div className="ml-[16px]"><Ico s={16} w={1.300} c="#868c92" d="M4 9V4h14v13H10M4 8h14M7 1v3M15 1v3M1 14h8M6 11l3 3-3 3" /></div>
                </div>
                <div className="ml-auto flex items-center pt-1">
                  <span className="w-[84px] whitespace-nowrap">11:13:27 (UTC)</span>
                  <div className="h-5 w-px bg-[#3f454e]" />
                  <span className="ml-[14px] w-[27px] text-[12px] font-normal text-[#868c92]">%</span>
                  <span className="w-[27px]">log</span>
                  <span className="w-[20px] text-[#5a9dfb]">auto</span>
                </div>
              </div>
            </div>
          </div>
        </div>
        <OrderPanel />
        <RightRail />
      </div>
    </div>
  );
}

function MainTaskbar() {
  const c = "#e4e9ea";
  return (
    <div className="flex h-10 items-center bg-gradient-to-r from-[#1b2838] via-[#1d302f] to-[#1b2a35] font-['Open_Sans',sans-serif] text-[11.5px] text-white">
      <TaskIcons />
      <div className="ml-auto flex items-center">
        <svg width="25" height="20" viewBox="0 0 25 20"><circle cx="17" cy="7" r="6.500" fill="#f59b23" /><path d="M5 19a4.500 4.500 0 0 1 0-9 6.500 6.500 0 0 1 12-1 5 5 0 0 1 3 10z" fill="#c6dcf8" /></svg>
        <span className="ml-[9px] w-[37px] text-[12.8px]">18°C</span>
        <span className="w-[109px] text-[13px] whitespace-nowrap">Mostly cloudy</span>
        <div className="flex items-center gap-2">
          <Ico s={16} w={2.500} c={c} d="M7 1v7M1 7h8M12 2v5M11 8h7M8 12v6"><circle cx="14" cy="14" r="5" fill="#e01e6a" stroke="none" /></Ico>
          <Ico s={16} w={1.400} c={c}><rect x="3" y="2" width="14" height="15" fill="#566" /><rect x="4" y="13" width="12" height="3" fill="#4fb7f5" stroke="none" /></Ico>
          <Ico s={16} w={1.500} c={c} d="M3 6h9v9H3zM12 9l4-2v7l-4-2M4 3c3-3 6-3 9 0M4 18c3 2 6 2 9 0M7.500 9a1.500 1.500 0 1 0 .1 0" />
          <Ico s={17} w={1} c="none"><path d="M9 1l8 3v5c0 5-4 8-8 10C5 17 1 14 1 9V4z" fill="#fff" /><path d="M9 1v18M1 9h16" stroke="#243" /><circle cx="14" cy="14" r="5.500" fill="#12a150" /><path d="M11 14l2.500 2.500L17 12" stroke="#fff" strokeWidth="1.500" /></Ico>
          <Ico s={16} w={1.500} c="#9ba0aa"><rect x="1" y="2" width="18" height="16" fill="#c4c4c8" /><path d="M2 14.500h16v3H2z" fill="#2a2f7a" stroke="#fff" strokeWidth="0.800" /></Ico>
          <Ico s={16} w={1.300} c="none"><rect x="0" y="3" width="20" height="14" fill="#2b3336" /><path d="M1 10c4-5 9-6 18-5v11C10 17 5 15 1 10z" fill="#76b900" /><path d="M4 10c3-3 8-3 11 0c-3 3-8 3-11 0M9.500 9a1.300 1.300 0 1 0 .1 0" stroke="#223" /></Ico>
          <Ico s={17} w={1.400} c={c} d="M8 6h11v8H8M19 8.500h1v3M1 5h5v4a2 2 0 0 1-5 0zM2 5V2M5 5V2M3.500 11v5h4" />
          <Ico s={16} w={1.500} c={c} d="M3 19C3 9 9 3 19 3M8 19c0-7 4-11 11-11M12.500 19c0-4 2-6.500 6.500-6.500M17 17h2v2h-2z" />
          <Ico s={16} w={1.400} c={c} d="M1 7h4l4-4v14l-4-4H1zM13 7l6 6M19 7l-6 6" />
        </div>
        <span className="ml-[11px] w-[30px] text-[11.3px]">ENG</span>
        <div className="mr-[1px] w-[64px] text-center text-[11.3px] leading-[18px] tracking-[-0.2px]"><div className="-mt-px">13:13</div><div>11.10.2023</div></div>
        <div className="ml-[12px]"><Ico s={18} w={1.200} c="#fff" d="M1 3h18v12h-5v4l-4-4H1z" /></div>
        <div className="mr-1 ml-[19px] h-10 w-px bg-[#7d888c]" />
      </div>
    </div>
  );
}

type Proc = { kind?: string; name: string; exp?: string; cells: string[]; heat?: string };

const V = "Очень низкое";
const std = (cpu: string, mem: string, disk = "0 МБ/с") => [cpu, mem, disk, "0 Мбит/с", V, V];
const child = (cpu: string, mem: string, heat: string, disk?: string): Proc => ({ kind: "child", name: "Google Chrome", cells: std(cpu, mem, disk), heat });

/* heat: one digit per metric column, 0 = lightest tint, 3 = strongest */
const APPS: Proc[] = [
  { kind: "top", name: "Google Chrome (9)", exp: "open", cells: ["13,7%", "538,9 МБ", "0,1 МБ/с", "0 Мбит/с", "Умеренный", "Низкий"], heat: "221031" },
  child("2,3%", "65,8 МБ", "110000"), child("0%", "3,9 МБ", "010000"), child("0%", "19,3 МБ", "010000"), child("0%", "7,8 МБ", "010000"),
  child("0%", "9,5 МБ", "010000"), child("0%", "2,8 МБ", "010000"),
  { kind: "child", name: "Google Chrome", cells: ["11,0%", "301,0 МБ", "0,1 МБ/с", "0 Мбит/с", "Умеренный", "Низкий"], heat: "211031" },
  child("0%", "7,8 МБ", "010000"), child("0,4%", "120,9 МБ", "111000", "0,1 МБ/с"),
  { kind: "vs", name: "Visual Studio Code (7)", exp: "shut", cells: std("2,0%", "271,9 МБ"), heat: "110000" },
  { kind: "mon", name: "Диспетчер задач", exp: "shut", cells: std("0,6%", "24,9 МБ"), heat: "110000" },
];
const BACKGROUND: Proc[] = [
  { kind: "alps", name: "Alps Pointing-device Driver", cells: std("0%", "1,7 МБ"), heat: "010000" },
  { kind: "alps2", name: "Alps Pointing-device Driver", cells: std("0%", "0,8 МБ"), heat: "010000" },
  { kind: "alps3", name: "Alps Pointing-device Driver for ...", cells: std("0%", "0,9 МБ"), heat: "010000" },
  { kind: "exe", name: "Antimalware Service Executable", exp: "shut", cells: std("0%", "189,5 МБ", "0,1 МБ/с"), heat: "011000" },
  { kind: "exe", name: "ApMsgFwd", cells: std("0%", "1,3 МБ"), heat: "010000" },
  { kind: "exe", name: "Application Frame Host", cells: std("0%", "5,5 МБ"), heat: "010000" },
  { kind: "exe", name: "bash", cells: std("0%", "4,1 МБ"), heat: "010000" },
];

const COLS = "grid grid-cols-[234px_120px_73px_73px_73px_73px_100px_100px]";
const SEL = ["bg-[#e2e1d4]", "bg-[#dfdccb]", "bg-[#e1dbc2]", "bg-[#e2d6ba]"];
const TINT = ["bg-[#fff2c4]", "bg-[#f9eca8]", "bg-[#f9eca8]", "bg-[#f9eca8]"];

function ProcIcon({ kind }: { kind?: string }) {
  if (kind === "top" || kind === "child") return <ChromeLogo s={16} />;
  if (kind === "vs") return <VsLogo s={16} />;
  if (kind === "mon") return <MonitorLogo s={16} />;
  if (kind === "alps")
    return <svg width="16" height="16" viewBox="0 0 16 16"><rect x="0.500" y="0.500" width="15" height="15" fill="#8a8a8a" /><rect x="2" y="2" width="12" height="9" fill="#c4c4c8" stroke="#1a1f7a" /><path d="M2 12h5v3H2zM8 12h6v3H8z" fill="#fff" stroke="#1a1f7a" /></svg>;
  if (kind === "alps2")
    return <svg width="16" height="16" viewBox="0 0 16 16"><path d="M10 0v5h5M12 0v16M15 0v6M2 12h5v3h8M10 8h5v4h-5" fill="none" stroke="#111" /><rect x="0" y="1" width="9" height="9" fill="#fff" stroke="#e01010" strokeWidth="1.500" /><path d="M1 2l7 7M4 1l5 5" stroke="#e01010" strokeWidth="1.500" /></svg>;
  if (kind === "alps3")
    return <svg width="16" height="16" viewBox="0 0 16 16"><path d="M4 0.500h8v4H4z" fill="#11e81c" /><path d="M4.500 6c2-1.500 6-1.500 7.500 0s1 8-3.500 9.500C3 14 3 8 4.500 6z" fill="#ed1111" /></svg>;
  return <svg width="16" height="14" viewBox="0 0 16 14"><rect x="0.500" y="0.500" width="15" height="13" fill="#fff" stroke="#8a8e94" /><path d="M1 1h14v2H1z" fill="#a6aab0" /><path d="M4 5h4v7H4z" fill="#1878d4" /><path d="M9.500 6h4M9.500 8.500h4M9.500 11h4" stroke="#9a9ea4" /></svg>;
}

function ProcRow({ p }: { p: Proc }) {
  const sel = p.kind === "top" || p.kind === "child";
  const small = p.kind === "child";
  return (
    <div className={`${COLS} w-[846px] ${small ? "h-[22px]" : "h-7"} ${sel ? "bg-[#d9d9d9]" : ""}`}>
      <div className={`col-span-2 flex items-center border-r ${sel ? "border-[#d8d4c4]" : "border-[#ecd9a2]"} ${small ? "pl-[36px]" : "pl-[28px]"}`}>
        {!small && (
          <span className="-ml-[21px] w-[21px]">
            {p.exp === "open" && <Ico s={10} w={3} c="#444" d="M2 6l8 8 8-8" />}
            {p.exp === "shut" && <Ico s={10} w={2} c="#8a8a8a" d="M6 1l8 9-8 9" />}
          </span>
        )}
        <ProcIcon kind={p.kind} />
        <span className={`${small ? "ml-[5px]" : "ml-1.5"} ${p.kind === "mon" ? "" : "text-[11.6px] tracking-[-0.18px]"} whitespace-nowrap`}>{p.name}</span>
      </div>
      {p.cells.map((t, i) => (
        <div key={i} className={`flex items-center whitespace-nowrap ${(sel ? SEL : TINT)[Number((p.heat ?? "000000")[i])]} border-r ${sel ? "border-[#dcd9cc]" : "border-[#ecd9a2]"} ${i < 4 ? "justify-end pr-1.5" : "pl-1.5"}`}>{t}</div>
      ))}
    </div>
  );
}

function GroupRow({ title }: { title: string }) {
  return (
    <div className={`${COLS} h-[38px] w-[846px]`}>
      <div className="col-span-2 border-r border-[#ecd9a2] pt-1.5 pl-2.5 text-[14.6px] leading-8 tracking-[-0.15px] text-[#2c63c4]">{title}</div>
      {[0, 1, 2, 3, 4, 5].map((i) => <div key={i} className="border-r border-[#ecd9a2] bg-[#fff8e3]" />)}
    </div>
  );
}

const HEAD = [["17%", "ЦП"], ["48%", "Память"], ["0%", "Диск"], ["0%", "Сеть"], ["", "Энергопотре..."], ["", "Тенденция эн..."]];

function TaskManager() {
  return (
    <div className="flex h-[728px] flex-col bg-white pl-px font-['Open_Sans',sans-serif] text-[11.4px] leading-none tracking-[-0.25px] text-[#0a0a0a]">
      <div className="flex h-[24px] shrink-0 items-center pl-0.5 text-[#999]">
        <MonitorLogo s={16} />
        <span className="ml-1 text-[11.5px] tracking-[-0.15px]">Диспетчер задач</span>
        <div className="mr-5 ml-auto flex h-[20px] items-center gap-9">
          <Ico s={10} w={2} c="#8a8a8a" d="M0 10h20" />
          <Ico s={10} w={2} c="#8a8a8a" d="M1 6h13v13H1zM6 6V1h13v13h-5" />
          <Ico s={10} w={2} c="#8a8a8a" d="M0 0l20 20M20 0L0 20" />
        </div>
      </div>
      <div className="flex h-[19px] shrink-0 items-center border-b-2 border-[#f0f0f0] pl-1.5 text-[11.5px] text-[#666]">
        <span className="w-[43px]">Файл</span><span className="w-[78px]">Параметры</span><span>Вид</span>
      </div>
      <div className="flex h-[25px] shrink-0 items-end text-[11.8px]">
        <div className="flex h-[23px] w-[73px] items-center justify-center border border-b-0 border-[#d9d9d9]">Процессы</div>
        {[["Производительность", "w-[126px]"], ["Журнал приложений", "w-[130px]"], ["Автозагрузка", "w-[84px]"], ["Пользователи", "w-[90px]"], ["Подробности", "w-[87px]"], ["Службы", "w-[56px]"]].map(([t, w]) => (
          <div key={t} className={`${w} flex h-[21px] items-center justify-center border-t border-r border-b border-[#d9d9d9] bg-[#f0f0f0] whitespace-nowrap`}>{t}</div>
        ))}
        <div className="flex-1 self-stretch border-b border-[#d9d9d9]" />
      </div>
      <div className="h-[57px] shrink-0 border-b border-[#a0a0a0] pt-[15px] text-[#4c607a]">
        <div className={`${COLS} h-[41px] w-[846px]`}>
          <div className="relative flex items-end border-r border-[#dadada] pb-[6px] pl-1.5">
            Имя
            <div className="absolute top-0 left-[107px]"><Ico s={10} w={2} c="#8a8a8a" d="M1 13l9-9 9 9" /></div>
          </div>
          <div className="flex items-end border-r border-[#dadada] pb-[6px] pl-1.5">Состояние</div>
          {HEAD.map(([n, t], i) => (
            <div key={t} className={`flex flex-col justify-end border-r border-[#dadada] pb-[6px] whitespace-nowrap ${i < 4 ? "pr-1.5 text-right" : "pl-2"}`}>
              <div className="mb-[6px] text-[15.6px] tracking-[-0.5px] text-black">{n}</div>
              <div>{t}</div>
            </div>
          ))}
        </div>
      </div>
      <div className="flex h-[554px] shrink-0">
        <div className="relative">
          <GroupRow title="Приложения (3)" />
          {APPS.map((p, i) => <ProcRow key={i} p={p} />)}
          <GroupRow title="Фоновые процессы (86)" />
          {BACKGROUND.map((p, i) => <ProcRow key={i} p={p} />)}
          <div className="absolute top-[61px] left-[356px] h-[3px] w-[147px] bg-[#c80000]" />
        </div>
        <div className="ml-auto flex w-4 flex-col items-center bg-[#f0f0f0]">
          <div className="flex h-[17px] items-center"><Ico s={8} w={4} c="#505050" d="M1 14l9-8 9 8" /></div>
          <div className="mr-px h-[51px] w-[15px] bg-[#cdcdcd]" />
          <div className="mt-auto flex h-[17px] items-center"><Ico s={8} w={4} c="#505050" d="M1 6l9 8 9-8" /></div>
        </div>
      </div>
      <div className="flex flex-1 items-center border-t border-[#a0a0a0] pr-[9px] pl-[7px]">
        <Ico s={19} w={1} c="#888" d="M10 0.800a9.200 9.200 0 1 0 .1 0M5.500 12L10 7l4.500 5" />
        <span className="ml-[7px]">Меньше</span>
        <div className="ml-auto flex h-[21px] w-[83px] items-center justify-center border border-[#adadad] bg-[#e1e1e1]">Снять задачу</div>
      </div>
    </div>
  );
}

export default function App() {
  return (
    <div className="flex h-[1080px] w-[3286px] overflow-hidden bg-black">
      <div className="relative flex w-[1920px] shrink-0 flex-col overflow-hidden">
        <Browser />
        <Terminal />
        <MainTaskbar />
        <div className="absolute top-[947px] left-[1392px] font-['Open_Sans',sans-serif] whitespace-nowrap text-[#9a9a9a]/75">
          <div className="text-[19.8px] leading-6">Активация Windows</div>
          <div className="text-[14.5px] leading-5 tracking-[-0.08px]">Чтобы активировать Windows, перейдите в раздел "Параметры".</div>
        </div>
      </div>
      <div className="w-[1366px] shrink-0">
        <TaskManager />
        <div className="flex h-10 items-center justify-between bg-gradient-to-r from-[#1b2838] via-[#1d302f] to-[#1b2a35] pr-[1px] font-['Open_Sans',sans-serif] text-[11.3px] text-white">
          <TaskIcons />
          <div className="w-[64px] text-center leading-[18px] tracking-[-0.2px]"><div>13:13</div><div>11.10.2023</div></div>
        </div>
      </div>
    </div>
  );
}
